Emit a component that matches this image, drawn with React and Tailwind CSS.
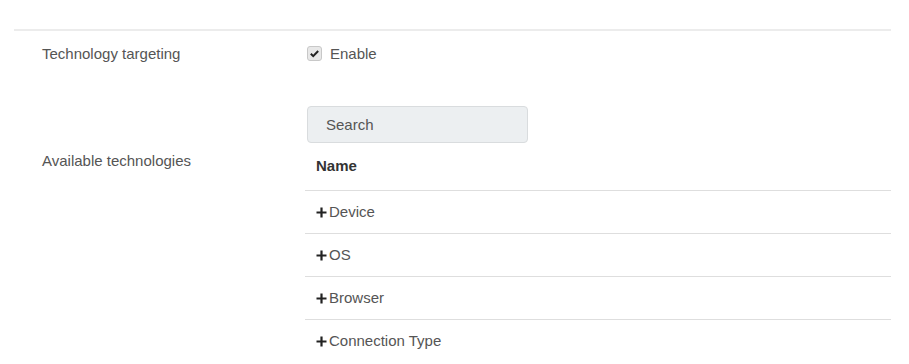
import React from "react"

function Plus() {
  return (
    <svg width="11" height="11" viewBox="0 0 11 11" className="shrink-0">
      <path d="M5.5 0.5v10M0.5 5.5h10" stroke="#222" strokeWidth="2.2" />
    </svg>
  )
}

export default function App() {
  const rows = ["Device", "OS", "Browser", "Connection Type"]

  return (
    <div
      className="bg-white w-[909px] h-[364px] overflow-hidden text-[15px] text-[#555]"
      style={{ fontFamily: '"Liberation Sans", Arial, sans-serif' }}
    >
      <div className="pl-[14px] pr-[18px] pt-[29px]">
        <div className="h-[2px] bg-[#ececec]" />

        <div className="flex h-[46px] items-center">
          <div className="w-[293px] pl-[28px]">Technology targeting</div>
          <label className="flex items-center gap-[8px]">
            <span className="flex h-[15px] w-[15px] items-center justify-center rounded-[3px] border border-[#c8c8c8] bg-[#e8e8e8] mt-[-2px]">
              <svg width="11" height="11" viewBox="0 0 12 12">
                <path d="M2 6.3l2.6 2.6L10 3.3" fill="none" stroke="#222" strokeWidth="2.2" />
              </svg>
            </span>
            <span>Enable</span>
          </label>
        </div>

        <div className="flex">
          <div className="w-[293px] pl-[28px] pt-[73px]">Available technologies</div>
          <div className="flex-1 pt-[29px]">
            <input
              placeholder="Search"
              className="block h-[37px] w-[221px] rounded-[4px] border border-[#d9dcde] bg-[#eceff1] pl-[18px] text-[15px] text-[#555] outline-none placeholder:text-[#555]"
            />
            <div className="-ml-[2px]">
              <div className="flex h-[48px] items-center border-b border-[#dedede] pl-[11px] font-bold text-[#333]">
                Name
              </div>
              {rows.map((r, i) => (
                <div
                  key={r}
                  className={`flex h-[43px] items-center gap-[2px] pl-[11px] ${
                    i < rows.length - 1 ? "border-b border-[#dedede]" : ""
                  }`}
                >
                  <Plus />
                  <span>{r}</span>
                </div>
              ))}
            </div>
          </div>
        </div>
      </div>
    </div>
  )
}
